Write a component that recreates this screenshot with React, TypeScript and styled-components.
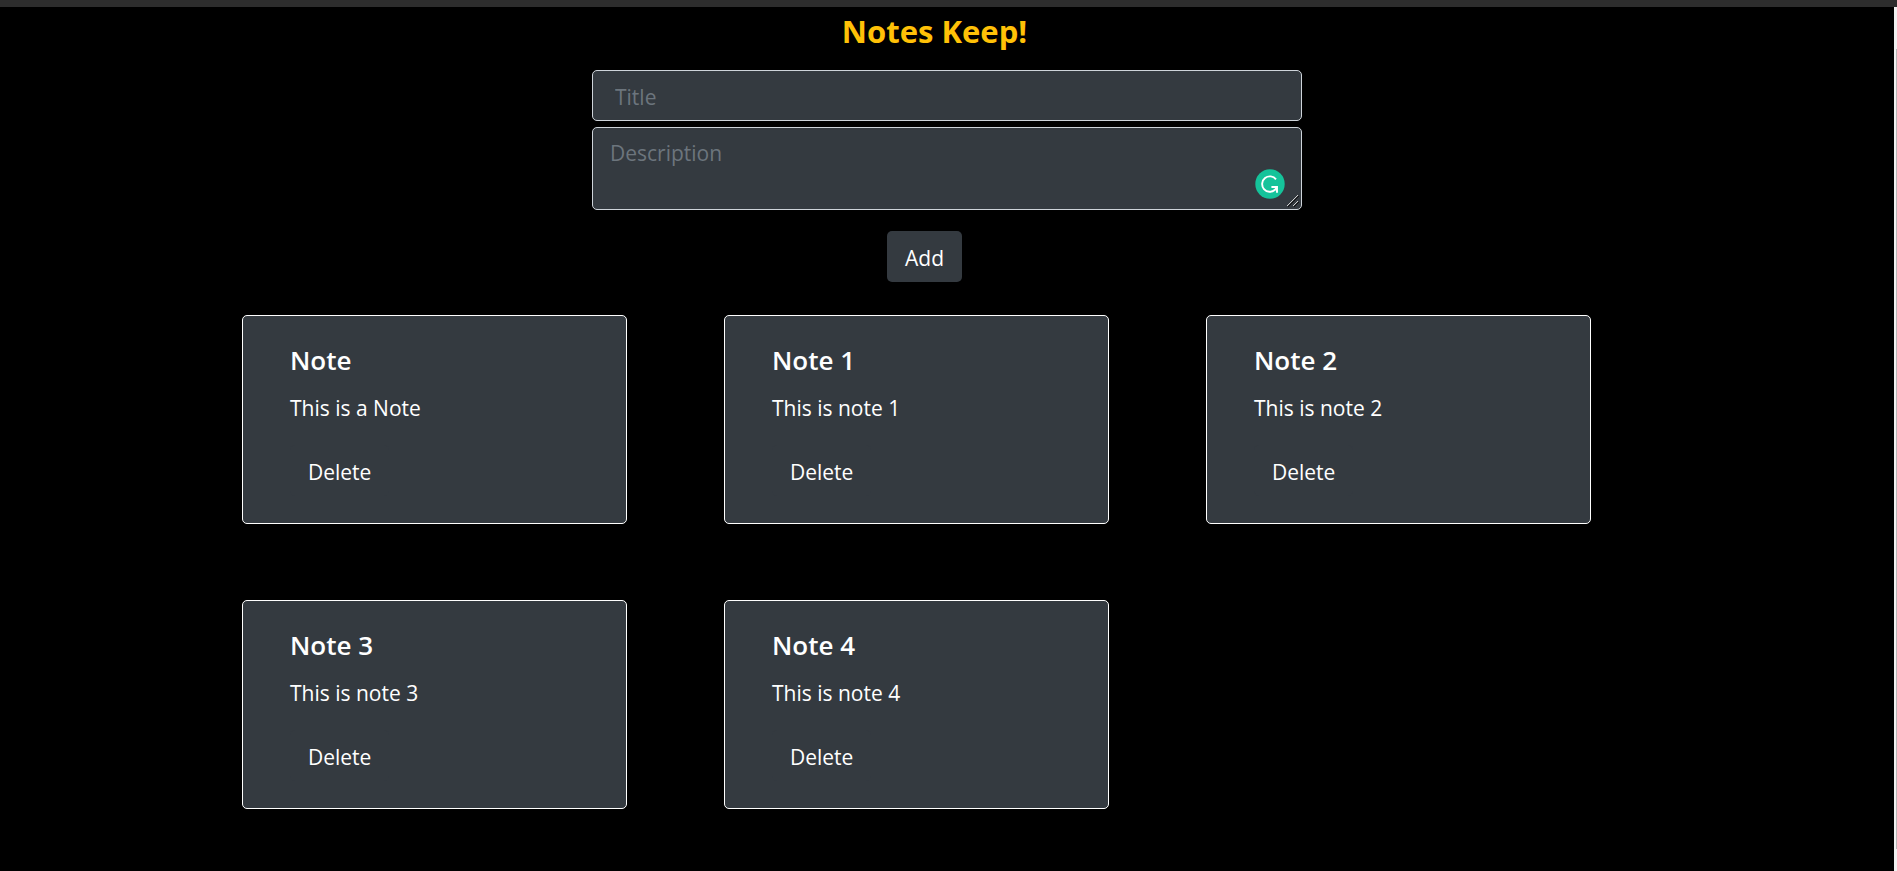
import React, { useState } from "react";
import styled, { createGlobalStyle } from "styled-components";

const GlobalStyle = createGlobalStyle`
  * { box-sizing: border-box; }
  html { background: #000; }
  body {
    margin: 0;
    background: #000;
    color: #fff;
    font-family: "Segoe UI", "Open Sans", "Noto Sans", sans-serif;
    font-size: 21px;
    line-height: 32px;
  }
`;

const Page = styled.div`
  display: grid;
  grid-template-columns: minmax(0, 1fr) 3px;
  grid-template-rows: 7px 1fr;
  min-height: 100vh;
`;

const TopEdge = styled.div`
  grid-column: 1 / -1;
  background: #2d2d2d;
`;

const Main = styled.main`
  display: flex;
  flex-direction: column;
  align-items: center;
`;

const ScrollTrack = styled.div`
  display: flex;
  justify-content: flex-end;
  padding: 42px 0 22px;
  background: #f1f1f1;
`;

const ScrollThumb = styled.div`
  width: 1px;
  background: #b8b8b8;
`;

const Heading = styled.h1`
  margin: 6px 0 20px;
  padding-right: 25px;
  color: #ffc107;
  font-size: 31px;
  font-weight: 700;
  line-height: 37px;
`;

const Form = styled.form`
  display: flex;
  flex-direction: column;
  gap: 6px;
  width: 100%;
  max-width: 710px;
`;

const TitleInput = styled.input`
  width: 100%;
  height: 51px;
  padding: 2px 22px 0;
  border: 1px solid #ced4da;
  border-radius: 5px;
  background: #343a40;
  color: #fff;
  font: inherit;
  &::placeholder { color: #6c757d; opacity: 1; }
`;

const DescriptionField = styled.div`
  position: relative;
  display: flex;
`;

const DescriptionInput = styled.textarea`
  width: 100%;
  height: 83px;
  padding: 9px 17px;
  border: 1px solid #ced4da;
  border-radius: 5px;
  background: #343a40;
  color: #fff;
  font: inherit;
  resize: vertical;
  &::placeholder { color: #6c757d; opacity: 1; }
  &::-webkit-resizer { background: transparent; }
`;

const AssistantBadge = styled.svg`
  position: absolute;
  right: 17px;
  bottom: 11px;
`;

const ResizeGrip = styled.svg`
  position: absolute;
  right: 3px;
  bottom: 3px;
  pointer-events: none;
`;

const Button = styled.button`
  height: 51px;
  padding: 2px 18px 0;
  border: 0;
  border-radius: 5px;
  background: #343a40;
  color: #fff;
  font: inherit;
  cursor: pointer;
`;

const FormActions = styled.div`
  display: flex;
  justify-content: center;
  padding: 15px 45px 33px 0;
`;

const NotesArea = styled.section`
  width: 100%;
  padding: 0 303px 60px 242px;
`;

const NotesGrid = styled.div`
  display: grid;
  grid-template-columns: repeat(3, minmax(0, 1fr));
  gap: 76px 97px;
`;

const Card = styled.article`
  display: flex;
  flex-direction: column;
  align-items: flex-start;
  padding: 28px 47px 27px;
  border: 1px solid #fff;
  border-radius: 5px;
  background: #343a40;
`;

const CardTitle = styled.h2`
  margin: 0 0 16px;
  font-size: 26px;
  font-weight: 600;
  line-height: 32px;
`;

const CardText = styled.p`
  margin: 0 0 21px;
`;

const initialNotes = [
  { title: "Note", text: "This is a Note" },
  { title: "Note 1", text: "This is note 1" },
  { title: "Note 2", text: "This is note 2" },
  { title: "Note 3", text: "This is note 3" },
  { title: "Note 4", text: "This is note 4" },
];

export default function App() {
  const [notes, setNotes] = useState(initialNotes);
  const [title, setTitle] = useState("");
  const [text, setText] = useState("");

  const addNote = (event: React.FormEvent) => {
    event.preventDefault();
    if (!title && !text) return;
    setNotes([...notes, { title, text }]);
    setTitle("");
    setText("");
  };

  return (
    <Page>
      <GlobalStyle />
      <TopEdge />
      <Main>
        <Heading>Notes Keep!</Heading>
        <Form onSubmit={addNote}>
          <TitleInput
            aria-label="Title"
            placeholder="Title"
            value={title}
            onChange={(e) => setTitle(e.target.value)}
          />
          <DescriptionField>
            <DescriptionInput
              aria-label="Description"
              placeholder="Description"
              value={text}
              onChange={(e) => setText(e.target.value)}
            />
            <AssistantBadge width="30" height="30" viewBox="0 0 30 30" aria-hidden="true">
              <circle cx="15" cy="15" r="14.7" fill="#15c39a" />
              <path
                d="M21 10.4A7.7 7.7 0 1 0 20 20.8L22 18.2M16.4 18H22V23.8"
                fill="none"
                stroke="#fff"
                strokeWidth="1.9"
              />
            </AssistantBadge>
            <ResizeGrip width="12" height="12" viewBox="0 0 12 12" aria-hidden="true">
              <path d="M0 11L11 0M6 11L11 6" stroke="#d0d0d0" strokeWidth="1" />
              <path d="M1 12L12 1M7 12L12 7" stroke="#111" strokeWidth="1" />
            </ResizeGrip>
          </DescriptionField>
          <FormActions>
            <Button type="submit">Add</Button>
          </FormActions>
        </Form>
        <NotesArea>
          <NotesGrid>
            {notes.map((note, index) => (
              <Card key={index}>
                <CardTitle>{note.title}</CardTitle>
                <CardText>{note.text}</CardText>
                <Button type="button" onClick={() => setNotes(notes.filter((_, i) => i !== index))}>
                  Delete
                </Button>
              </Card>
            ))}
          </NotesGrid>
        </NotesArea>
      </Main>
      <ScrollTrack>
        <ScrollThumb />
      </ScrollTrack>
    </Page>
  );
}
